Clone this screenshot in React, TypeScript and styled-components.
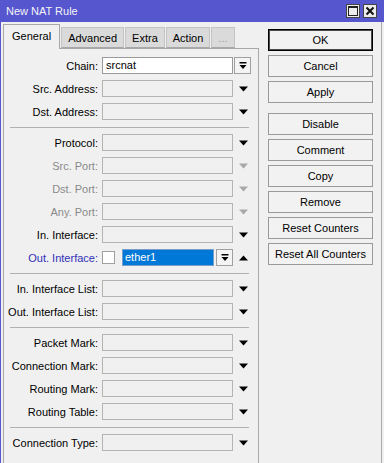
import styled, { createGlobalStyle } from "styled-components";

const GlobalStyle = createGlobalStyle`
  html, body {
    margin: 0;
    padding: 0;
    background: #f0f0f0;
  }
  body {
    font-family: "Liberation Sans", Arial, sans-serif;
    font-size: 11px;
    color: #000;
  }
`;

type Field = {
  label: string;
  value?: string;
  kind?: "chain" | "plain" | "disabled" | "outIface";
};

const sections: Field[][] = [
  [
    { label: "Chain", value: "srcnat", kind: "chain" },
    { label: "Src. Address" },
    { label: "Dst. Address" },
  ],
  [
    { label: "Protocol" },
    { label: "Src. Port", kind: "disabled" },
    { label: "Dst. Port", kind: "disabled" },
    { label: "Any. Port", kind: "disabled" },
    { label: "In. Interface" },
    { label: "Out. Interface", value: "ether1", kind: "outIface" },
  ],
  [{ label: "In. Interface List" }, { label: "Out. Interface List" }],
  [
    { label: "Packet Mark" },
    { label: "Connection Mark" },
    { label: "Routing Mark" },
    { label: "Routing Table" },
  ],
  [{ label: "Connection Type" }],
];

const tabs = ["General", "Advanced", "Extra", "Action", "..."];

const buttons = [
  ["OK", "Cancel", "Apply"],
  ["Disable", "Comment", "Copy", "Remove", "Reset Counters", "Reset All Counters"],
];

const Arrow = ({ up, color = "#000" }: { up?: boolean; color?: string }) => (
  <svg width="9" height="6" viewBox="0 0 9 6">
    {up ? (
      <polygon points="0,5.5 9,5.5 4.5,0.5" fill={color} />
    ) : (
      <polygon points="0,0.5 9,0.5 4.5,5.5" fill={color} />
    )}
  </svg>
);

const BarArrow = () => (
  <svg width="8" height="8" viewBox="0 0 8 8">
    <rect x="0.5" y="0" width="7" height="1.5" fill="#000" />
    <polygon points="0.5,3 7.5,3 4,7" fill="#000" />
  </svg>
);

const App = () => {
  return (
    <>
      <GlobalStyle />
      <Window>
        <TitleBar>
          <Title>New NAT Rule</Title>
          <TitleButtons>
            <TitleButton>
              <svg width="10" height="10" viewBox="0 0 10 10">
                <rect x="0.5" y="0.5" width="9" height="9" fill="none" stroke="#222" />
                <rect x="0.5" y="0.5" width="9" height="1.5" fill="#222" />
              </svg>
            </TitleButton>
            <TitleButton>
              <svg width="10" height="10" viewBox="0 0 10 10">
                <path d="M1.5 1.5 L8.5 8.5 M8.5 1.5 L1.5 8.5" stroke="#111" strokeWidth="2" />
              </svg>
            </TitleButton>
          </TitleButtons>
        </TitleBar>
        <Body>
          <LeftColumn>
            <TabRow>
              {tabs.map((t, i) => (
                <Tab key={t} $active={i === 0} $muted={t === "..."}>
                  {t}
                </Tab>
              ))}
            </TabRow>
            <Panel>
              {sections.map((section, si) => (
                <div key={si}>
                  {si > 0 && <Separator />}
                  {section.map((f) => (
                    <Row key={f.label}>
                      <Label $kind={f.kind}>{f.label}:</Label>
                      {f.kind === "outIface" ? (
                        <>
                          <CheckBox />
                          <SelectedField>{f.value}</SelectedField>
                          <DropButton $small>
                            <BarArrow />
                          </DropButton>
                          <ArrowSlot>
                            <Arrow up />
                          </ArrowSlot>
                        </>
                      ) : (
                        <>
                          <Input $white={f.kind === "chain"}>{f.value}</Input>
                          {f.kind === "chain" ? (
                            <DropButton>
                              <BarArrow />
                            </DropButton>
                          ) : (
                            <ArrowSlot>
                              <Arrow color={f.kind === "disabled" ? "#a8a8a8" : "#000"} />
                            </ArrowSlot>
                          )}
                        </>
                      )}
                    </Row>
                  ))}
                </div>
              ))}
            </Panel>
          </LeftColumn>
          <RightColumn>
            {buttons.map((group, gi) => (
              <ButtonGroup key={gi}>
                {group.map((b) => (
                  <Button key={b} $default={b === "OK"}>
                    {b}
                  </Button>
                ))}
              </ButtonGroup>
            ))}
          </RightColumn>
        </Body>
      </Window>
    </>
  );
};

export default App;

const Window = styled.div`
  width: 384px;
  height: 463px;
  overflow: hidden;
  display: flex;
  flex-direction: column;
  box-sizing: border-box;
  border-left: 1px solid #5656cf;
  background: #f0f0f0;
`;

const TitleBar = styled.div`
  height: 22px;
  flex: none;
  margin-left: -1px;
  background: #5656cf;
  display: flex;
  align-items: center;
  justify-content: space-between;
  padding: 0 7px 0 6px;
`;

const Title = styled.div`
  color: #f4f4f4;
  font-size: 11px;
`;

const TitleButtons = styled.div`
  display: flex;
  gap: 3px;
`;

const TitleButton = styled.div`
  width: 14px;
  height: 14px;
  box-sizing: border-box;
  border: 1px solid #444;
  background: #ececec;
  display: flex;
  align-items: center;
  justify-content: center;
`;

const Body = styled.div`
  flex: 1;
  display: flex;
  min-height: 0;
`;

const LeftColumn = styled.div`
  width: 256px;
  flex: none;
  padding: 2px 0 0 2px;
  display: flex;
  flex-direction: column;
`;

const TabRow = styled.div`
  display: flex;
  align-items: flex-end;
  height: 24px;
  position: relative;
  z-index: 1;
`;

const Tab = styled.div<{ $active?: boolean; $muted?: boolean }>`
  box-sizing: border-box;
  height: ${({ $active }) => ($active ? "25px" : "21px")};
  margin-bottom: ${({ $active }) => ($active ? "-1px" : "0")};
  padding: 0 ${({ $active }) => ($active ? "8px" : "6px")};
  display: flex;
  align-items: center;
  border: 1px solid ${({ $active }) => ($active ? "#a8a8a8" : "#c4c4c4")};
  border-bottom: ${({ $active }) => ($active ? "none" : "1px solid #a8a8a8")};
  background: ${({ $active }) => ($active ? "#f0f0f0" : "#dadada")};
  color: ${({ $muted }) => ($muted ? "#9a9a9a" : "#000")};
  margin-left: ${({ $active }) => ($active ? "0" : "1px")};
  padding-bottom: ${({ $active }) => ($active ? "3px" : "0")};
`;

const Panel = styled.div`
  flex: 1;
  border: 1px solid #a8a8a8;
  border-bottom: none;
  padding: 5px 0 0 0;
  background: #f0f0f0;
`;

const Row = styled.div`
  height: 23px;
  display: flex;
  align-items: center;
`;

const Label = styled.div<{ $kind?: string }>`
  width: 94px;
  text-align: right;
  white-space: nowrap;
  margin-right: 4px;
  color: ${({ $kind }) =>
    $kind === "disabled" ? "#8a8a8a" : $kind === "outIface" ? "#3030b8" : "#000"};
`;

const Input = styled.div<{ $white?: boolean }>`
  width: 131px;
  height: 17px;
  box-sizing: border-box;
  border: 1px solid ${({ $white }) => ($white ? "#9a9a9a" : "#b4b4b4")};
  background: ${({ $white }) => ($white ? "#fff" : "#f0f0f0")};
  padding-left: 3px;
  line-height: 15px;
`;

const CheckBox = styled.div`
  width: 13px;
  height: 13px;
  box-sizing: border-box;
  border: 1px solid #a0a0a0;
  background: #fff;
  margin-right: 7px;
`;

const SelectedField = styled.div`
  width: 92px;
  height: 17px;
  box-sizing: border-box;
  border: 1px solid #7a9cc8;
  background: #0078d7;
  color: #fff;
  padding-left: 2px;
  line-height: 15px;
`;

const DropButton = styled.div<{ $small?: boolean }>`
  width: 17px;
  height: 17px;
  box-sizing: border-box;
  margin-left: ${({ $small }) => ($small ? "2px" : "1px")};
  border: 1px solid #a0a0a0;
  background: #f4f4f4;
  display: flex;
  align-items: center;
  justify-content: center;
`;

const ArrowSlot = styled.div`
  width: 17px;
  margin-left: 2px;
  display: flex;
  justify-content: center;
`;

const Separator = styled.div`
  height: 1px;
  background: #b0b0b0;
  margin: 4px 9px 3px 6px;
`;

const RightColumn = styled.div`
  flex: 1;
  padding: 7px 0 0 9px;
  margin-right: 2px;
  border-right: 1px solid #a8a8a8;
  display: flex;
  flex-direction: column;
  gap: 10px;
`;

const ButtonGroup = styled.div`
  display: flex;
  flex-direction: column;
  gap: 4px;
`;

const Button = styled.div<{ $default?: boolean }>`
  width: 105px;
  height: 22px;
  box-sizing: border-box;
  border: 1px solid ${({ $default }) => ($default ? "#000" : "#9a9a9a")};
  box-shadow: ${({ $default }) => ($default ? "inset 0 0 0 1px #4a4a4a" : "none")};
  background: #f2f2f2;
  display: flex;
  align-items: center;
  justify-content: center;
  white-space: nowrap;
`;
